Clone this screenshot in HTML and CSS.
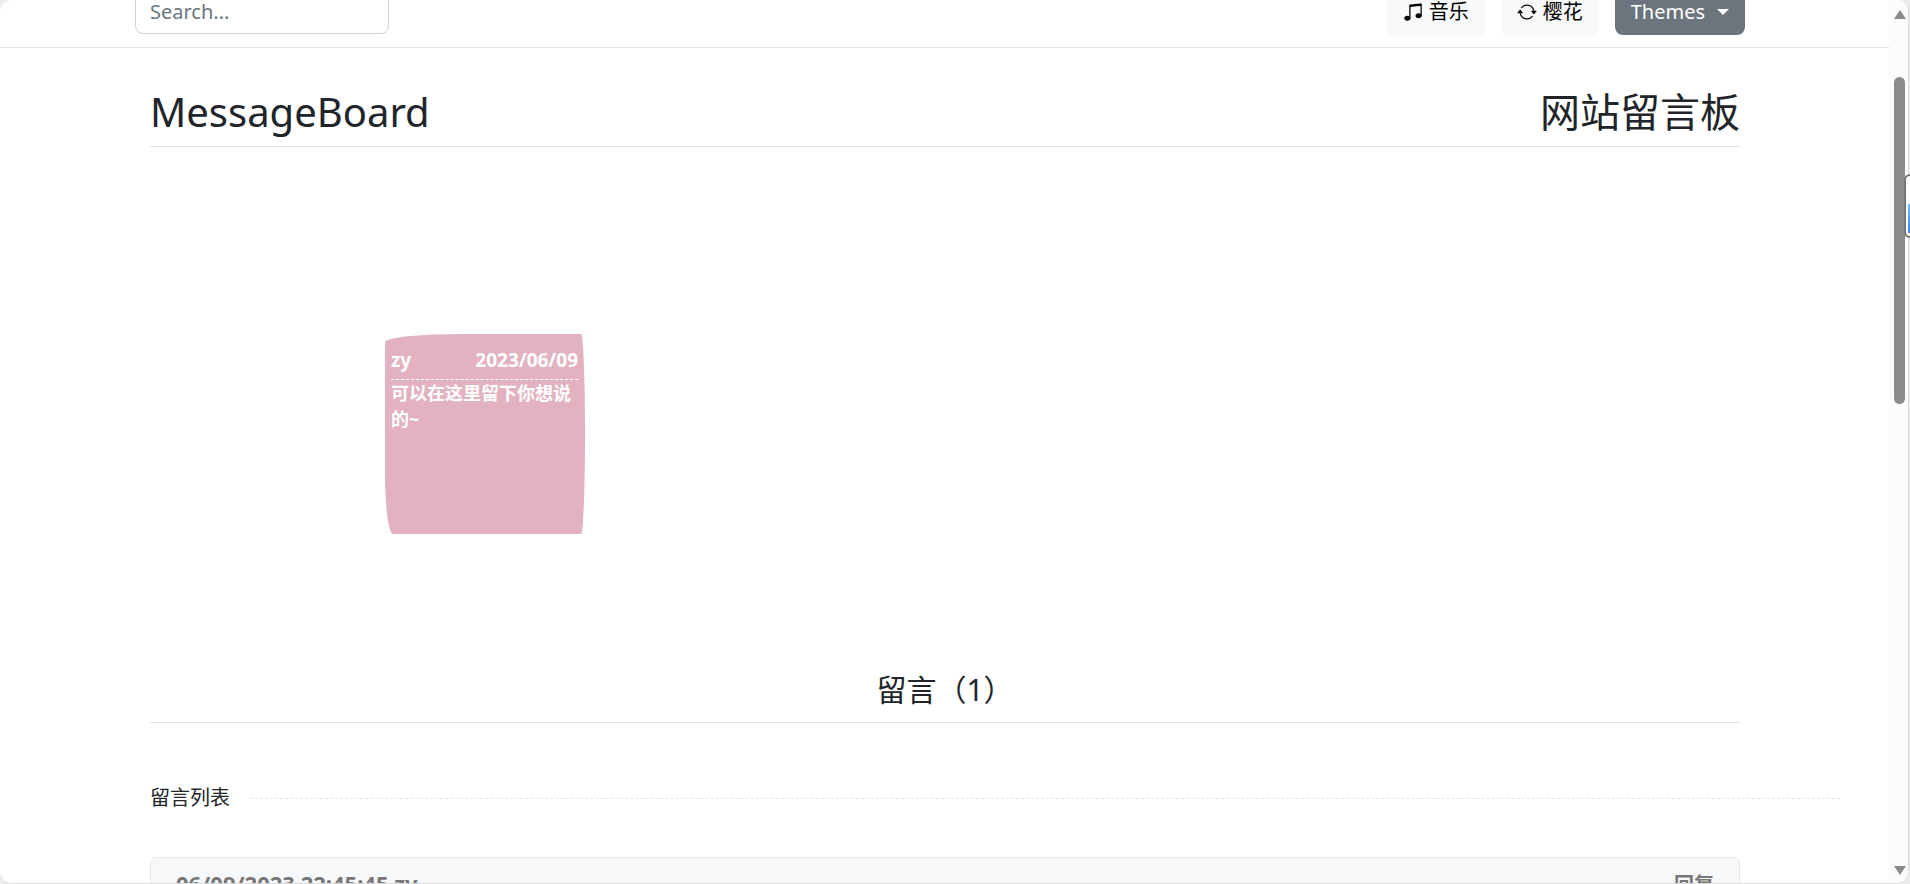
FILE: index.html
```html
<!DOCTYPE html>
<html lang="zh-CN">
<head>
<meta charset="utf-8">
<title>MessageBoard</title>
<link rel="stylesheet" href="styles.css">
</head>
<body>
<div class="window">
  <div class="page">
    <header class="topbar">
      <input class="search" type="search" placeholder="Search..." aria-label="Search">
      <nav class="actions">
        <button class="btn btn-light" type="button">
          <svg class="icon" viewBox="0 0 16 16" aria-hidden="true"><path d="M6 13c0 1.105-1.120 2-2.500 2S1 14.105 1 13c0-1.104 1.120-2 2.500-2s2.500.896 2.500 2m9-2c0 1.105-1.120 2-2.500 2s-2.500-.895-2.500-2 1.120-2 2.500-2 2.500.895 2.500 2"/><path fill-rule="evenodd" d="M14 11V2h1v9zM6 3v10H5V3z"/><path d="M5 2.905a1 1 0 0 1 .9-.995l8-.8a1 1 0 0 1 1.100.995V3L5 4z"/></svg>
          音乐
        </button>
        <button class="btn btn-light" type="button">
          <svg class="icon" viewBox="0 0 16 16" aria-hidden="true"><path d="M11.534 7h3.932a.25.25 0 0 1 .192.410l-1.966 2.360a.25.25 0 0 1-.384 0l-1.966-2.360a.25.25 0 0 1 .192-.410m-11 2h3.932a.25.25 0 0 0 .192-.410L2.692 6.230a.25.25 0 0 0-.384 0L.342 8.590A.25.25 0 0 0 .534 9"/><path fill-rule="evenodd" d="M8 3c-1.552 0-2.940.707-3.857 1.818a.5.5 0 1 1-.771-.636A6.002 6.002 0 0 1 13.917 7H12.900A5 5 0 0 0 8 3M3.100 9a5.002 5.002 0 0 0 8.757 2.182.5.5 0 1 1 .771.636A6.002 6.002 0 0 1 2.083 9z"/></svg>
          樱花
        </button>
        <button class="btn btn-dark" type="button">Themes <span class="caret"></span></button>
      </nav>
    </header>

    <main class="container">
      <div class="title-row">
        <h1 class="title">MessageBoard</h1>
        <p class="title">网站留言板</p>
      </div>

      <section class="board">
        <article class="note">
          <div class="note-head"><span>zy</span><time>2023/06/09</time></div>
          <p class="note-text">可以在这里留下你想说的~</p>
        </article>
      </section>

      <h2 class="count">留言（1）</h2>

      <div class="list-label">留言列表</div>

      <article class="comment">
        <span class="comment-meta">06/09/2023 22:45:45 zy</span>
        <a class="reply" href="#">回复</a>
      </article>
    </main>
  </div>

  <div class="scrollbar">
    <span class="arrow arrow-up"></span>
    <span class="thumb"></span>
    <span class="arrow arrow-down"></span>
  </div>
</div>
<div class="side-widget"><span class="side-fill"></span></div>
</body>
</html>
```
FILE: styles.css
```css
* { box-sizing: border-box; }

body {
  margin: 0;
  height: 100vh;
  overflow: hidden;
  padding-right: 1px;
  background: #ececec;
  color: #212529;
  font: 20px/30px "Noto Sans", "Noto Sans CJK SC", sans-serif;
}

.window {
  display: flex;
  height: 100%;
  overflow: hidden;
  border: 1px solid #dcdcdc;
  border-width: 0 1px 1px 0;
  border-radius: 12px;
  background: #fff;
}

.page {
  flex: 1;
  min-width: 0;
  overflow: hidden;
}

.topbar {
  display: flex;
  justify-content: space-between;
  align-items: flex-end;
  height: 48px;
  padding: 0 144px 10px 135px;
  border-bottom: 1px solid #dee2e6;
}

.search {
  width: 254px;
  height: 46px;
  margin-bottom: 3px;
  padding: 0 14px;
  border: 1px solid #ced4da;
  border-radius: 8px;
  background: #fff;
  color: #212529;
  font: inherit;
  appearance: none;
}

.search::placeholder { color: #6c757d; opacity: 1; }

.actions {
  display: flex;
  align-items: flex-end;
  gap: 16px;
}

.btn {
  display: flex;
  align-items: center;
  gap: 6px;
  height: 50px;
  padding: 0 16px;
  border: 0;
  border-radius: 8px;
  font: inherit;
  white-space: nowrap;
}

.btn-light { background: #f8f9fa; color: #000; }

.btn-dark {
  gap: 12px;
  height: 46px;
  margin-bottom: 2px;
  background: #6c757d;
  color: #fff;
}

.icon { width: 20px; height: 20px; fill: currentColor; }

.caret {
  border: 6px solid transparent;
  border-top-color: currentColor;
  border-bottom: 0;
}

.container { padding: 0 149px 0 150px; }

.title-row {
  display: flex;
  justify-content: space-between;
  align-items: flex-end;
  height: 99px;
  padding-bottom: 8px;
  border-bottom: 1px solid #dee2e6;
}

.title {
  margin: 0;
  font-size: 40px;
  font-weight: 400;
  line-height: 52px;
}

.board { height: 516px; padding: 187px 0 0 235px; }

.note {
  width: 200px;
  height: 200px;
  padding: 12px 7px 0 6px;
  border-radius: 80px 4px 4px 8px / 8px 100px 100px 60px;
  background: #e3b2c1;
  color: #fff;
  font-size: 18px;
  font-weight: 700;
  line-height: 26px;
}

.note-head {
  display: flex;
  justify-content: space-between;
  height: 34px;
  border-bottom: 1px dashed #fff;
  font-size: 19px;
  line-height: 28px;
}

.note-text { margin: 0; }

.count {
  margin: 0;
  height: 60px;
  border-bottom: 1px solid #dee2e6;
  font-size: 30px;
  font-weight: 400;
  line-height: 54px;
  text-align: center;
}

.list-label {
  display: flex;
  align-items: center;
  gap: 20px;
  margin: 60px -100px 44px 0;
}

.list-label::after {
  content: "";
  flex: 1;
  border-top: 1px dashed #e5e5e5;
}

.comment {
  display: flex;
  justify-content: space-between;
  padding: 12px 25px;
  border: 1px solid #e9e9e9;
  border-radius: 6px;
  background: #f6f8fa;
  color: #777;
  font-weight: 700;
}

.comment-meta { font-size: 22px; line-height: 26px; }

.reply { color: inherit; text-decoration: none; }

.scrollbar {
  display: flex;
  flex-direction: column;
  align-items: center;
  justify-content: space-between;
  width: 19px;
  padding: 10px 0 8px 2px;
  background: #fcfcfc;
}

.arrow { border: 6px solid transparent; }
.arrow-up { border-top: 0; border-bottom: 9px solid #8b8b8b; }
.arrow-down { border-bottom: 0; border-top: 9px solid #8b8b8b; }

.thumb {
  width: 11px;
  height: 327px;
  margin-bottom: 405px;
  border-radius: 6px;
  background: #8b8b8b;
}

.side-widget {
  position: absolute;
  top: 174px;
  right: 0;
  width: 6px;
  height: 64px;
  padding: 28px 0 3px 2px;
  border: 2px solid #777;
  border-right: 0;
  border-radius: 6px 0 0 6px;
  background: #fff;
}

.side-fill {
  display: block;
  height: 100%;
  background: linear-gradient(#6cc0ff, #3c82f6);
}
```
